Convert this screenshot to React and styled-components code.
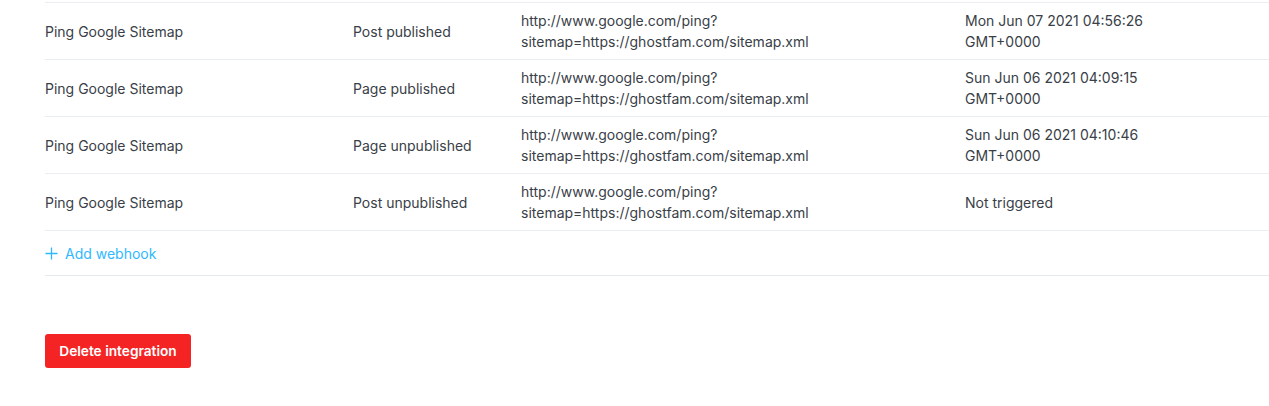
import styled, { createGlobalStyle } from "styled-components";

const GlobalStyle = createGlobalStyle`
  body {
    margin: 0;
    background: #fff;
    font-family: Inter, "Noto Sans", sans-serif;
    color: #394047;
  }
`;

const webhooks = [
  { name: "Ping Google Sitemap", event: "Post published", last: ["Mon Jun 07 2021 04:56:26", "GMT+0000"] },
  { name: "Ping Google Sitemap", event: "Page published", last: ["Sun Jun 06 2021 04:09:15", "GMT+0000"] },
  { name: "Ping Google Sitemap", event: "Page unpublished", last: ["Sun Jun 06 2021 04:10:46", "GMT+0000"] },
  { name: "Ping Google Sitemap", event: "Post unpublished", last: ["Not triggered"] },
];

const App = () => {
  return (
    <Page>
      <GlobalStyle />
      <Table>
        {webhooks.map((hook, i) => (
          <Row key={i}>
            <Cell>{hook.name}</Cell>
            <Cell>{hook.event}</Cell>
            <Cell>
              http://www.google.com/ping?
              <br />
              sitemap=https://ghostfam.com/sitemap.xml
            </Cell>
            <Cell>
              {hook.last.map((line, j) => (
                <span key={j}>
                  {j > 0 && <br />}
                  {line}
                </span>
              ))}
            </Cell>
          </Row>
        ))}
        <AddRow>
          <AddLink href="#">
            <svg width="13" height="13" viewBox="0 0 13 13" fill="none">
              <path d="M6.5 0.5v12M0.5 6.5h12" stroke="currentColor" strokeWidth="1.3" />
            </svg>
            Add webhook
          </AddLink>
        </AddRow>
      </Table>
      <DeleteButton>Delete integration</DeleteButton>
    </Page>
  );
};

export default App;

const Page = styled.div`
  padding: 2px 0 40px 45px;
`;
const Table = styled.div`
  border-top: 1px solid #ebeef0;
`;
const Row = styled.div`
  display: grid;
  grid-template-columns: 308px 168px 444px 1fr;
  align-items: center;
  height: 56px;
  border-bottom: 1px solid #ebeef0;
`;
const Cell = styled.div`
  font-size: 14px;
  line-height: 21px;
  color: #394047;
`;
const AddRow = styled.div`
  display: flex;
  align-items: center;
  height: 44px;
  border-bottom: 1px solid #e6e9eb;
`;
const AddLink = styled.a`
  display: flex;
  align-items: center;
  gap: 7px;
  color: #30b8ff;
  font-size: 14px;
  text-decoration: none;
`;
const DeleteButton = styled.button`
  margin-top: 58px;
  height: 34px;
  width: 146px;
  padding: 0;
  border: none;
  border-radius: 3px;
  background: #f52424;
  color: #fff;
  font-family: Inter, "Noto Sans", sans-serif;
  font-size: 13.7px;
  font-weight: 600;
  cursor: pointer;
`;
